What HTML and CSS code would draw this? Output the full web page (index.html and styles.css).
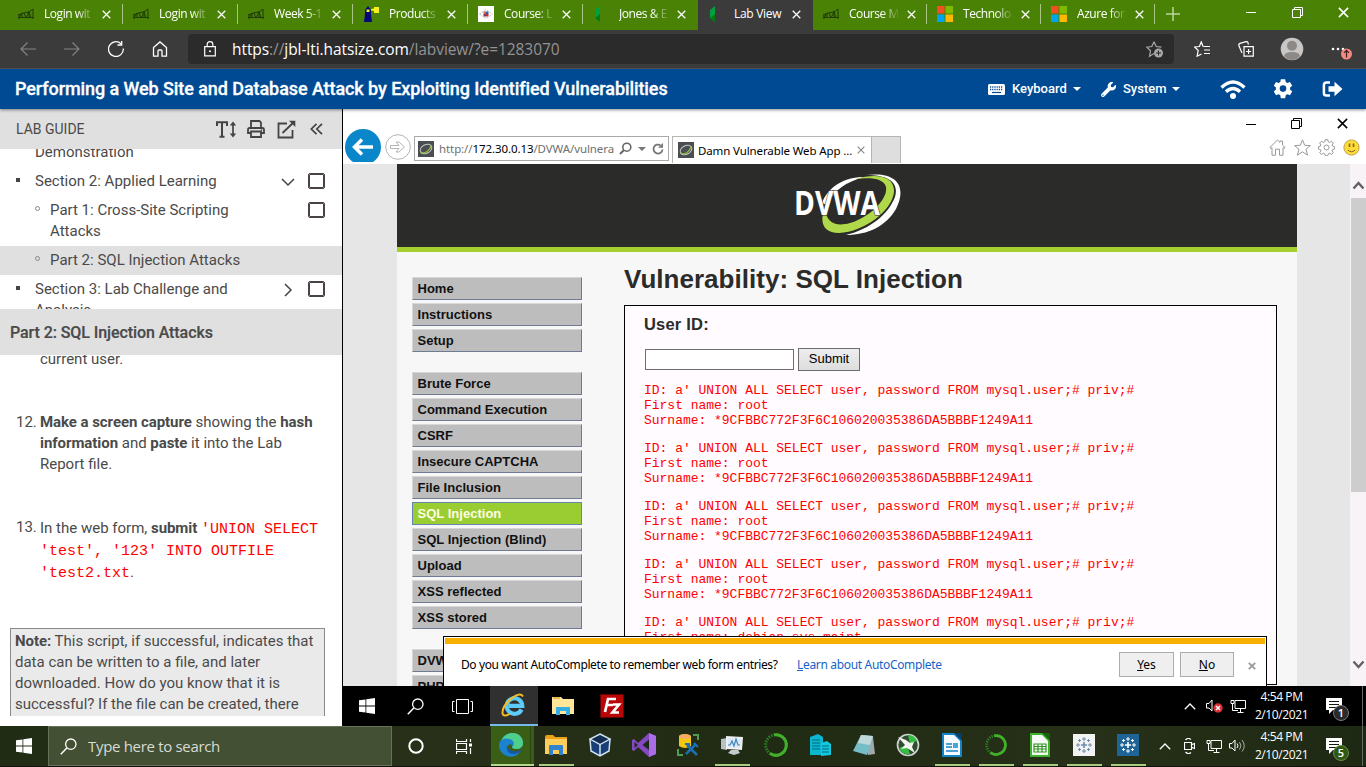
FILE: index.html
```html
<!DOCTYPE html>
<html lang="en">
<head>
<meta charset="utf-8">
<title>Lab View</title>
<link rel="stylesheet" href="styles.css">
</head>
<body>
<svg class="defs" aria-hidden="true">
  <symbol id="x" viewBox="0 0 10 10"><path d="M.8.8l8.4 8.4M9.2.8L.8 9.200" fill="none" stroke="currentColor" stroke-width="1.4"/></symbol>
  <symbol id="bridge" viewBox="0 0 16 12"><path d="M0 7l5-2 6-1 4-3v10M0 9.500h16M1 6v5M4 5v5M6 5l2 5 3-6 2 6M11 3v7M1 10l3-5" fill="none" stroke="#1f3d08" stroke-width="1"/></symbol>
  <symbol id="gem" viewBox="0 0 16 16"><path d="M7 0v16L2 12V4z" fill="#00a040"/><path d="M7 8v8L2 12z" fill="#087a12"/></symbol>
  <symbol id="ms" viewBox="0 0 16 16"><path d="M0 0h7.500v7.500H0z" fill="#f25022"/><path d="M8.500 0H16v7.500H8.500z" fill="#7fba00"/><path d="M0 8.500h7.500V16H0z" fill="#00a4ef"/><path d="M8.500 8.500H16V16H8.500z" fill="#ffb900"/></symbol>
  <symbol id="win" viewBox="0 0 16 16"><path d="M0 2.300L6.500 1.400V7.600H0zM7.300 1.200L16 0v7.600H7.300zM0 8.400h6.500v6.200L0 13.700zM7.300 8.400H16V16l-8.700-1.200z" fill="#fff"/></symbol>
  <symbol id="search" viewBox="0 0 17 17"><path d="M.8 16.200l6-6.200" fill="none" stroke="#fff" stroke-width="1.500"/><circle cx="10.800" cy="6.200" r="5.200" fill="none" stroke="#fff" stroke-width="1.300"/></symbol>
  <symbol id="ball" viewBox="0 0 16 16"><path d="M0 0h16v16H0z" fill="#4a4d52"/><ellipse cx="8" cy="8" rx="6.200" ry="4.300" transform="rotate(-28 8 8)" fill="none" stroke="#c8ccc5" stroke-width="1"/><path d="M3 11c3 2 8 0 10-6" fill="none" stroke="#8fbd3a" stroke-width="1.200"/></symbol>
  <symbol id="restore" viewBox="0 0 11 11"><path d="M.5 2.500h8v8h-8zM2.500 2.500v-2h8v8h-2" fill="none" stroke="currentColor"/></symbol>
  <symbol id="up" viewBox="0 0 12 7"><path d="M.8 6.200L6 1l5.200 5.200" fill="none" stroke="#fff" stroke-width="1.300"/></symbol>
  <symbol id="net" viewBox="0 0 16 14"><path d="M5 1.500h10.500v8H5zM1 1.500h3v3H1zM2.500 4.500v7H8M10.500 9.500v3.500M7.500 13.500h6" fill="none" stroke="#fff"/></symbol>
  <symbol id="folder" viewBox="0 0 22 20"><path d="M0 2q0-2 2-2h6l2 2h12v17H0z" fill="#e9a21c"/><path d="M0 4h22v15H0z" fill="#ffcd59"/><path d="M4 11q0-1 1-1h12q1 0 1 1v9h-4v-5H8v5H4z" fill="#2f83cf"/></symbol>
  <symbol id="note" viewBox="0 0 16 16"><path d="M0 0h16v12H7l-4 4v-4H0z" fill="#fff"/><path d="M3 3.500h10M3 6.500h10M3 9.500h7" stroke="#151a10" stroke-width="1.200"/></symbol>
  <symbol id="ana" viewBox="0 0 24 24"><circle cx="12" cy="12" r="10.300" fill="none" stroke="#2a7d22" stroke-width="3" stroke-dasharray="1.500 1.200"/><path d="M10 1.900A10.300 10.300 0 1 1 6 20.400" fill="none" stroke="#43b02a" stroke-width="3"/></symbol>
  <symbol id="tab" viewBox="0 0 18 18"><path d="M9 6v6M6 9h6" stroke-width="1.600"/><path d="M9 1v4M7 3h4M9 13v4M7 15h4M1 9h4M3 7v4M13 9h4M15 7v4M4.500 3v3M3 4.500h3M13.500 3v3M12 4.500h3M4.500 12v3M3 13.500h3M13.500 12v3M12 13.500h3" stroke-width="1"/></symbol>
</svg>

<header class="tabs">
  <div class="tab"><svg class="fav bridge"><use href="#bridge"/></svg><span class="name fade">Login wit</span><svg class="close"><use href="#x"/></svg></div>
  <div class="tab"><svg class="fav bridge"><use href="#bridge"/></svg><span class="name fade">Login wit</span><svg class="close"><use href="#x"/></svg></div>
  <div class="tab"><svg class="fav bridge"><use href="#bridge"/></svg><span class="name fade">Week 5-1</span><svg class="close"><use href="#x"/></svg></div>
  <div class="tab"><svg class="fav" viewBox="0 0 16 16"><path d="M2 4l3-4 3 4v4l1 8H1l1-8z" fill="#05057c"/><path d="M3.500 3.500h3v2.500h-3zM8 3l3-.5V1h5v6h-5V5L8 4.500z" fill="#f8f01c"/></svg><span class="name fade">Products</span><svg class="close"><use href="#x"/></svg></div>
  <div class="tab"><svg class="fav" viewBox="0 0 16 16"><path d="M0 0h16v16H0z" fill="#fff"/><path d="M1.500 8L8 3.500 14.500 8 8 12.500z" fill="none" stroke="#c4bfbf" stroke-dasharray="2 1"/><path d="M5.500 5.500H8V8H5.500z" fill="#d76a35"/><path d="M8 5.500h2.500V8H8z" fill="#3558a0"/><path d="M5.500 8H8v2.500H5.500z" fill="#75416a"/><path d="M8 8h2.500v2.500H8z" fill="#c52d38"/></svg><span class="name fade">Course: L</span><svg class="close"><use href="#x"/></svg></div>
  <div class="tab last"><svg class="fav"><use href="#gem"/></svg><span class="name fade">Jones &amp; E</span><svg class="close"><use href="#x"/></svg></div>
  <div class="tab active"><svg class="fav"><use href="#gem"/></svg><span class="name">Lab View</span><svg class="close"><use href="#x"/></svg></div>
  <div class="tab narrow"><svg class="fav bridge"><use href="#bridge"/></svg><span class="name fade">Course M</span><svg class="close"><use href="#x"/></svg></div>
  <div class="tab narrow"><svg class="fav"><use href="#ms"/></svg><span class="name fade">Technolo</span><svg class="close"><use href="#x"/></svg></div>
  <div class="tab narrow"><svg class="fav"><use href="#ms"/></svg><span class="name fade">Azure for</span><svg class="close"><use href="#x"/></svg></div>
  <svg class="plus" viewBox="0 0 14 14"><path d="M7 0v14M0 7h14" stroke="#bcd69a" stroke-width="1.500"/></svg>
  <div class="wincontrols">
    <svg width="10" height="10" viewBox="0 0 10 10"><path d="M0 5.500h10" stroke="#fff"/></svg>
    <svg width="11" height="11"><use href="#restore"/></svg>
    <svg width="11" height="11"><use href="#x"/></svg>
  </div>
</header>

<div class="toolbar">
  <svg class="nav dim" viewBox="0 0 16 16"><path d="M16 8H1M7.500 1.500L1 8l6.500 6.500"/></svg>
  <svg class="nav dim" viewBox="0 0 16 16"><path d="M0 8h15M8.500 1.500L15 8l-6.500 6.500"/></svg>
  <svg class="nav" viewBox="0 0 16 16"><path d="M15.300 7.500A7.400 7.400 0 1 1 13 2.700M13.700 0v4H9.500" stroke-width="1.300"/></svg>
  <svg class="nav" viewBox="0 0 16 16"><path d="M1.500 6.500L8 .9l6.500 5.600v8.700H10V10q0-1-1-1H7q-1 0-1 1v5.200H1.500z" stroke-width="1.300"/></svg>
  <div class="omnibox">
    <svg class="lock" viewBox="0 0 12 16"><path d="M.7 5.700h10.600v9.100H.7zM3.200 5.700V3.300q0-2.600 2.800-2.600t2.800 2.600v2.400" fill="none" stroke="#fff" stroke-width="1.200"/><circle cx="6" cy="10.200" r="1" fill="#fff"/></svg>
    <span class="url"><i>https</i>://<i>jbl-lti.hatsize.com</i>/labview/?e=1283070</span>
    <svg class="addfav" viewBox="0 0 18 17"><path d="M8 .8l2.200 4.700 5.200.6M8 .8L5.800 5.500.7 6.200l3.800 3.600-1 5.400L8 12.500" fill="none" stroke="#a8a8a8" stroke-width="1.200"/><circle cx="12.500" cy="12" r="4.500" fill="#a8a8a8"/><path d="M12.500 9.500v5M10 12h5" stroke="#2b2b2b"/></svg>
  </div>
  <div class="tools">
    <svg width="17" height="16" viewBox="0 0 17 16"><path d="M9 5.500L7.300.8 5.400 5.500.6 6l3.600 3.500-1.100 5.700L7.500 13M9.500 5.500H16M10 9h6M10 12.500h6" fill="none" stroke="#fff" stroke-width="1.200"/></svg>
    <svg width="17" height="16" viewBox="0 0 17 16"><path d="M6 5.700h9.300v9.500H6zM10.600 8v5M8.100 10.500h5" fill="none" stroke="#fff" stroke-width="1.200"/><path d="M4 12L.8 4.500Q.5 3 2 2.400L8 .7q1.500-.3 2 1l.4 2" fill="none" stroke="#fff" stroke-width="1.200"/></svg>
    <svg width="24" height="24" viewBox="0 0 24 24"><circle cx="12" cy="12" r="11.300" fill="#c9c7c5"/><circle cx="12" cy="8.700" r="5" fill="#8d8987"/><path d="M4 19q1-4 8-4t8 4q-3 4-8 4t-8-4" fill="#8d8987"/></svg>
    <svg width="21" height="24" viewBox="0 0 21 24"><circle cx="2" cy="12" r="1.300" fill="#fff"/><circle cx="7" cy="12" r="1.300" fill="#fff"/><circle cx="12" cy="12" r="1.300" fill="#fff"/><circle cx="15.500" cy="17" r="5.500" fill="#f28b82"/><path d="M15.500 20.500v-7M13 15.800l2.500-2.500 2.500 2.500" fill="none" stroke="#3b2020" stroke-width="1.200"/></svg>
  </div>
</div>

<div class="labbar">
  <h1>Performing a Web Site and Database Attack by Exploiting Identified Vulnerabilities</h1>
  <svg class="kbd" viewBox="0 0 17 11"><path d="M1.500 0h14q1.500 0 1.500 1.500v8q0 1.500-1.500 1.500h-14Q0 11 0 9.500v-8Q0 0 1.500 0z" fill="#fff"/><path d="M2 3h13M2 5.500h13" stroke="#004a93" stroke-width="1.300" stroke-dasharray="1.200 1"/><path d="M4 8.500h9" stroke="#004a93" stroke-width="1.200"/></svg>
  <span class="kb">Keyboard</span><b class="caret"></b>
  <svg class="wrench" viewBox="0 0 512 512"><path fill="#fff" d="M508 109c-2-9-14-12-20-5l-75 74-68-11-11-68 74-75c7-6 4-18-5-20-47-12-99 1-136 38-39 39-50 97-34 147L19 403a66 66 0 0 0 93 93l213-213c50 16 108 5 148-34 37-37 49-89 35-140zM66 472a24 24 0 1 1 0-48 24 24 0 0 1 0 48z"/></svg>
  <span class="sys">System</span><b class="caret"></b>
  <svg class="wifi" viewBox="0 0 26 19"><path d="M1.500 7.500Q13-3.500 24.500 7.500M6 11.800q7-6.500 14 0" fill="none" stroke="#fff" stroke-width="3.300"/><circle cx="13" cy="16" r="3" fill="#fff"/></svg>
  <svg class="gear" viewBox="0 0 20 20"><path fill-rule="evenodd" fill="#fff" d="M7.800.3h4.400l.5 2.700 1.700 1L17 3l2.200 3.800-2.100 1.800v2l2.100 1.800L17 16.200l-2.600-1-1.700 1-.5 3H7.800l-.5-3-1.700-1-2.600 1-2.200-3.800 2.100-1.800v-2L.8 6.800 3 3l2.600 1 1.700-1zM10 6.300a3.300 3.300 0 1 0 0 6.600 3.300 3.300 0 0 0 0-6.600z"/></svg>
  <svg class="out" viewBox="0 0 20 16"><path d="M7.500 1.400H4q-2.600 0-2.600 2.600v8q0 2.600 2.600 2.600h3.500" fill="none" stroke="#fff" stroke-width="2.500"/><path d="M6 5.200h6V.8L20 8l-8 7.200v-4.400H6z" fill="#fff"/></svg>
</div>

<main class="main">
  <aside class="guide">
    <div class="guidehead">
      <span>LAB GUIDE</span>
      <svg width="21" height="17" viewBox="0 0 21 17"><path d="M1 5V1.200h10V5M6 1v14.500M3.500 15.800h5" fill="none" stroke="#444" stroke-width="2"/><path d="M17 2v13" stroke="#444" stroke-width="1.700"/><path d="M13.800 4.500L17 .5l3.200 4zM13.800 12.500l3.200 4 3.200-4z" fill="#444"/></svg>
      <svg width="18" height="18" viewBox="0 0 18 18"><path d="M4 8V1h8.500L14 2.500V8M4 13H1V9.500Q1 8 2.500 8h13Q17 8 17 9.500V13h-3M4 11.500h10V17H4z" fill="none" stroke="#444" stroke-width="1.800"/><circle cx="14.500" cy="10" r=".8" fill="#444"/></svg>
      <svg width="19" height="19" viewBox="0 0 19 19"><path d="M10 3.500H1.500v14h14V10M5.500 13L17 2" fill="none" stroke="#444" stroke-width="1.800"/><path d="M12 .8h6.300V7z" fill="#444"/></svg>
      <svg width="13" height="12" viewBox="0 0 13 12"><path d="M6.500.8L1.300 6l5.200 5.200M12 .8L6.800 6l5.200 5.200" fill="none" stroke="#444" stroke-width="1.700"/></svg>
    </div>
    <div class="toc">
      <div class="row s"><span>Demonstration</span></div>
      <div class="row s"><em class="sq"></em><span>Section 2: Applied Learning</span><svg class="chev" viewBox="0 0 14 14"><path d="M1 4l6 6 6-6"/></svg><i class="box"></i></div>
      <div class="row p"><em class="ring"></em><span>Part 1: Cross-Site Scripting Attacks</span><i class="box"></i></div>
      <div class="row p on"><em class="ring"></em><span>Part 2: SQL Injection Attacks</span></div>
      <div class="row s"><em class="sq"></em><span>Section 3: Lab Challenge and Analysis</span><svg class="chev" viewBox="0 0 14 14"><path d="M4 1l6 6-6 6"/></svg><i class="box"></i></div>
    </div>
    <h2>Part 2: SQL Injection Attacks</h2>
    <div class="text">
      <p class="cur">current user.</p>
      <div class="step"><span class="n">12.</span><p><b>Make a screen capture</b> showing the <b>hash<br>information</b> and <b>paste</b> it into the Lab<br>Report file.</p></div>
      <div class="step code"><span class="n">13.</span><p>In the web form, <b>submit</b> <code>'UNION SELECT<br>'test', '123' INTO OUTFILE<br>'test2.txt</code>.</p></div>
      <div class="notebox"><b>Note:</b> This script, if successful, indicates that<br>data can be written to a file, and later<br>downloaded. How do you know that it is<br>successful? If the file can be created, there</div>
    </div>
  </aside>

  <section class="remote">
    <div class="ietop">
      <div class="iecontrols">
        <svg width="10" height="10" viewBox="0 0 10 10"><path d="M0 5.500h10" stroke="#000"/></svg>
        <svg width="11" height="11"><use href="#restore"/></svg>
        <svg width="11" height="11"><use href="#x"/></svg>
      </div>
      <div class="ierow">
        <svg class="back" viewBox="0 0 36 33"><circle cx="18" cy="18" r="18" fill="#0a86ca"/><path d="M28 18H10M17 10.500L9.500 18l7.500 7.500" fill="none" stroke="#fff" stroke-width="3.500"/></svg>
        <svg class="fwd" viewBox="0 0 26 26"><circle cx="13" cy="13" r="12.300" fill="#fff" stroke="#b4b4b4"/><path d="M5.500 11.500H14l-3-3.500h3l5.500 5-5.500 5h-3l3-3.500H5.500z" fill="none" stroke="#b4b4b4"/></svg>
        <div class="addr"><svg class="fi"><use href="#ball"/></svg><span>http://<b>172.30.0.13</b>/DVWA/vulnera</span>
          <svg class="mag" viewBox="0 0 13 13"><circle cx="7.800" cy="5.200" r="4" fill="none" stroke="#666" stroke-width="1.600"/><path d="M5 8l-4 4" stroke="#666" stroke-width="2"/></svg>
          <svg class="dd" viewBox="0 0 8 4"><path d="M0 0h8L4 4z" fill="#777"/></svg>
          <svg class="ref" viewBox="0 0 12 12"><path d="M8.500 2.300A4.500 4.500 0 1 0 10.500 6.500" fill="none" stroke="#777" stroke-width="1.800"/><path d="M6 4.800h5V0z" fill="#777"/></svg></div>
        <div class="ietab"><svg class="fi"><use href="#ball"/></svg><span>Damn Vulnerable Web App ...</span><svg class="tx"><use href="#x"/></svg></div>
        <div class="stub"></div>
        <div class="ieicons">
          <svg viewBox="0 0 17 17"><path d="M.8 8.500L8.500 1l2.500 2.400V2h2.500v4l2.700 2.500L15 9.500l-1-.8v7.500h-3.500v-6h-4v6H3V8.700l-1 .8z"/></svg>
          <svg viewBox="0 0 17 17"><path d="M8.500.8l2.200 5.500 5.700.3-4.400 3.700 1.600 5.900-5.100-3.400-5.100 3.400L5 10.300.6 6.600l5.700-.3z"/></svg>
          <svg viewBox="0 0 17 17"><circle cx="8.500" cy="8.500" r="2.500"/><path d="M7.200.7h2.600l.5 2.200 1.300.6 1.900-1.300 1.800 1.800-1.200 2 .6 1.200 1.900.4v2.400l-2 .5-.5 1.300 1.200 1.900-1.800 1.700-1.900-1.200-1.300.6-.5 2H7.200l-.4-2-1.400-.6-1.900 1.200L1.700 13.700l1.200-1.900-.5-1.300-2-.5V7.600l2-.4.5-1.200-1.200-2 1.800-1.800 1.900 1.300 1.400-.6z"/></svg>
          <svg class="smile" viewBox="0 0 17 17"><circle cx="8.500" cy="8.500" r="7.600"/><path class="eyes" d="M6.500 4.500v3.500M10.500 4.500v3.500"/><path d="M4.800 11q3.700 3.500 7.400 0"/></svg>
        </div>
      </div>
    </div>
    <div class="view">
      <div class="dvwa">
        <div class="banner">
          <svg width="110" height="66" viewBox="0 0 110 66"><path d="M72 2C104-2 113 14 102 36 92 53 74 62 52 62 76 56 94 42 101 24 105 10 96 2 72 2z" fill="#fff"/><path d="M28 30C34 14 50 4 70 4 52 9 40 17 33 32z" fill="#fff"/><path d="M61 6C85-1 101 4 100 19 98 38 70 59 45 60 29 60 25 49 31 35 32 50 42 54 56 50 76 44 94 26 92 14 90 5 76 4 61 6z" fill="#b0d84b"/><text x="0" y="42" textLength="86" lengthAdjust="spacingAndGlyphs" class="logotext">DVWA</text></svg>
        </div>
        <div class="cols">
          <nav class="menu">
            <a>Home</a><a>Instructions</a><a>Setup</a>
            <a class="gap">Brute Force</a><a>Command Execution</a><a>CSRF</a><a>Insecure CAPTCHA</a><a>File Inclusion</a><a class="sel">SQL Injection</a><a>SQL Injection (Blind)</a><a>Upload</a><a>XSS reflected</a><a>XSS stored</a>
            <a class="gap">DVWA Security</a><a>PHP Info</a>
          </nav>
          <div class="body">
            <h3>Vulnerability: SQL Injection</h3>
            <div class="panel">
              <h4>User ID:</h4>
              <div class="form"><span class="input"></span><span class="submit">Submit</span></div>
<pre>ID: a' UNION ALL SELECT user, password FROM mysql.user;# priv;#
First name: root
Surname: *9CFBBC772F3F6C106020035386DA5BBBF1249A11</pre>
<pre>ID: a' UNION ALL SELECT user, password FROM mysql.user;# priv;#
First name: root
Surname: *9CFBBC772F3F6C106020035386DA5BBBF1249A11</pre>
<pre>ID: a' UNION ALL SELECT user, password FROM mysql.user;# priv;#
First name: root
Surname: *9CFBBC772F3F6C106020035386DA5BBBF1249A11</pre>
<pre>ID: a' UNION ALL SELECT user, password FROM mysql.user;# priv;#
First name: root
Surname: *9CFBBC772F3F6C106020035386DA5BBBF1249A11</pre>
<pre>ID: a' UNION ALL SELECT user, password FROM mysql.user;# priv;#
First name: debian-sys-maint</pre>
            </div>
          </div>
        </div>
      </div>
      <div class="scroll"><svg viewBox="0 0 12 9"><path d="M1 7.500l5-5.500 5 5.500"/></svg><i></i><svg viewBox="0 0 12 9"><path d="M1 1.500L6 7l5-5.500"/></svg></div>
      <div class="ask">
        <div class="askrow"><span class="q">Do you want AutoComplete to remember web form entries?</span><span class="learn"><u>L</u>earn about AutoComplete</span><span class="btn"><u>Y</u>es</span><span class="btn no"><u>N</u>o</span><svg class="ax" viewBox="0 0 8 8"><path d="M.8.8l6.400 6.400M7.200.8L.8 7.200" stroke="#999" stroke-width="1.800"/></svg></div>
      </div>
    </div>
    <div class="rbar">
      <svg class="r1" width="16" height="16"><use href="#win"/></svg>
      <svg class="r2" width="17" height="17"><use href="#search"/></svg>
      <svg class="r3" width="21" height="15" viewBox="0 0 21 15"><path d="M4.500.5h12v14h-12zM2.500 2.500h-2v10h2M18.500 2.500h2v10h-2" fill="none" stroke="#fff"/></svg>
      <div class="ietile"><svg width="26" height="24" viewBox="0 0 26 24"><path d="M20.500 16.500A7.800 7.800 0 1 1 21.300 12.800H8" fill="none" stroke="#5ccbf8" stroke-width="4.200"/><path d="M22 3.500Q19-1 11 5 1 13 1.500 20.500 2.500 24.500 9 20.500" fill="none" stroke="#f2bd27" stroke-width="2"/></svg></div>
      <svg class="r5" width="22" height="20" viewBox="0 0 22 20"><path d="M0 1h9l2 2h11v15H0z" fill="#ffe699"/><path d="M1 2h7" stroke="#e3ac31" stroke-width="1.500"/><path d="M4 11h14v8h-4v-4H8v4H4z" fill="#36aee4"/></svg>
      <svg class="r6" width="24" height="24" viewBox="0 0 24 24"><path d="M.5.500h23v23H.5z" fill="#b90606" stroke="#690000" stroke-dasharray="2 1"/><path d="M5 18L8 5h8M6.500 11H13M13 10.500h6L12.500 18.500H19" fill="none" stroke="#fff" stroke-width="2.700"/></svg>
      <div class="tray">
        <svg width="12" height="7"><use href="#up"/></svg>
        <svg class="t2" width="17" height="14" viewBox="0 0 17 14"><path d="M.5 4.500H3L6 1v11L3 9H.5z" fill="none" stroke="#fff"/><circle cx="12" cy="9" r="4.700" fill="#dc2d34"/><path d="M10 7l4 4M14 7l-4 4" stroke="#fff" stroke-width="1.400"/></svg>
        <svg class="t3" width="16" height="14"><use href="#net"/></svg>
        <div class="clock"><span>4:54 PM</span><span>2/10/2021</span></div>
        <div class="act"><svg width="16" height="16"><use href="#note"/></svg><b>1</b></div>
      </div>
    </div>
  </section>
</main>

<footer class="bar">
  <svg class="start" width="16" height="16"><use href="#win"/></svg>
  <div class="find"><svg width="17" height="17"><use href="#search"/></svg><span>Type here to search</span></div>
  <svg class="cort" viewBox="0 0 16 16"><circle cx="8" cy="8" r="6.700" fill="none" stroke="#fff" stroke-width="2"/></svg>
  <svg class="tv" viewBox="0 0 17 15"><path d="M.5 0v2.500h10V0M.5 15v-2.500h10V15M.5 4.500h10v6H.5zM14.500 0v3M14.500 9v6" fill="none" stroke="#fff" stroke-width="1.200"/><path d="M13 4.500h3v3h-3z" fill="#fff"/></svg>
  <div class="apps">
    <div class="app edge"><svg viewBox="0 0 24 24"><path d="M1 12C2 4 7 0 13 0c7 0 11 5 11 10 0 4-3 6-7 6-3 0-4-1-4-2 3-4-1-7-5-6-4 0-6 2-7 4z" fill="#36c8ae"/><path d="M14 0c7 0 10 6 10 10 0 4-3 6-7 6-3 0-4-1-3-3 3-4-1-8-9-8 2-3 5-5 9-5z" fill="#5ad27c" opacity=".7"/><path d="M0 12c0-4 4-7 9-6 5 0 7 4 5 7-3-3-6-1-5 2 1 4 6 6 12 4-3 4-8 6-13 4C3 21 0 17 0 12z" fill="#1c82d0"/><path d="M8 12c-2 7 4 12 13 7 2-1 2-2 1-2-7 3-13 1-14-5z" fill="#1558a8"/></svg></div>
    <div class="app run exp"><svg class="f" viewBox="0 0 22 20"><use href="#folder"/></svg></div>
    <div class="app"><svg viewBox="0 0 24 24"><path d="M12 1l10 5v12l-10 5.500L2 18V6z" fill="#173e75"/><path d="M12 1l10 5-10 5.500L2 6z" fill="#132c51" stroke="#d3e2ef" stroke-width="1.400"/><path d="M12 11.500V23M2 6l1 12 9 5 9-5 1-12" fill="none" stroke="#d3e2ef" stroke-width="1.500"/></svg></div>
    <div class="app"><svg viewBox="0 0 24 24"><path d="M17 0l7 3v18l-7 3L6 14l-4 4-2-1V7l2-1 4 4z" fill="#8548c4"/><path d="M17 6.500V17l-6.500-5zM2.500 9v6L6 12z" fill="#1d2b16"/><path d="M17 0l7 3v18l-7 3z" fill="#a96ee5"/></svg></div>
    <div class="app"><svg viewBox="0 0 24 24"><path d="M3 3q5-4 12 0v10q-6 4-12 0z" fill="#f3c812"/><ellipse cx="9" cy="3.500" rx="6" ry="2.500" fill="#f8aa62"/><path d="M17 2h5v5M2 16v6h5" fill="none" stroke="#4f9c55" stroke-width="2"/><path d="M10 21L20 11M11 12l10 10" stroke="#1e70b5" stroke-width="2.500"/><path d="M18 10l4 4M9 11h4v4" stroke="#1e70b5" stroke-width="2" fill="none"/></svg></div>
    <div class="app run"><svg viewBox="0 0 24 24"><path d="M1 6l6-1v12l-6-1z" fill="#b8bfc2"/><path d="M6 3l17 1-1 13-16-1z" fill="#edf0ef"/><path d="M8 5l13 .7-1 9L8 14z" fill="#dceafa"/><path d="M8 12h2l2-4 2 5 2-7 2 6h2" fill="none" stroke="#4384b7" stroke-width="1.200"/><path d="M11 17h7l2 3-6 2-6-2z" fill="#c5cacc"/></svg></div>
    <div class="app"><svg><use href="#ana"/></svg></div>
    <div class="app"><svg viewBox="0 0 24 24"><path d="M2 4l8-3 5 3v18H2z" fill="#0ab6d0"/><path d="M13 10l6-2 4 3v11l-10 1z" fill="#13c8de"/><path d="M4 7h8M4 10h8M4 13h8M4 16h8M14 13h7M14 16h7M14 19h7" stroke="#06667a"/></svg></div>
    <div class="app"><svg viewBox="0 0 24 24"><path d="M10 2l11 2 2 17-7 1z" fill="#9da9ad"/><path d="M9 2l12 1-6 19-14-4z" fill="#75bec8"/><path d="M9 2l12 1-3 9-12-2z" fill="#bed8d9"/></svg></div>
    <div class="app"><svg viewBox="0 0 24 24"><circle cx="12" cy="12" r="10.500" fill="#314c30" stroke="#cbd1ce" stroke-width="1.700"/><path d="M12 2a10 10 0 0 1 9 6l-7 3zM3 15l8-3 3 9Q6 22 3 15z" fill="#35bd44"/><path d="M2 4l8 3 4 3 4-1-2 5 3 6-8-5-6 1 4-4z" fill="#f4f4ee"/></svg></div>
    <div class="app run"><svg viewBox="0 0 24 24"><path d="M2 0h13l7 7v17H2z" fill="#1583c7"/><path d="M4 2h10l6 6v14H4z" fill="#f4fafd"/><path d="M14 0h8v8z" fill="#073e62"/><path d="M6 11h6M6 14h6M6 18h12" stroke="#1583c7" stroke-width="1.700"/><path d="M13 10h5v5h-5z" fill="#4ba3db"/></svg></div>
    <div class="app run"><svg class="sm"><use href="#ana"/></svg></div>
    <div class="app run"><svg viewBox="0 0 24 24"><path d="M2 0h13l7 7v17H2z" fill="#3fb22c"/><path d="M4 2h10l6 6v14H4z" fill="#f5fbf4"/><path d="M14 0h8v8z" fill="#146407"/><path d="M6 11h12v8H6zM6 13.500h12M6 16h12M10 11v8M14 11v8" fill="none" stroke="#329323" stroke-width="1.200"/></svg></div>
    <div class="app run"><div class="tb light"><svg viewBox="0 0 18 18"><use href="#tab"/></svg></div></div>
    <div class="app run"><div class="tb blue"><svg viewBox="0 0 18 18"><use href="#tab"/></svg></div></div>
  </div>
  <div class="tray">
    <svg width="12" height="7"><use href="#up"/></svg>
    <svg class="l2" width="11" height="16" viewBox="0 0 11 16"><path d="M.5 4.500h7v7h-7zM8 6.500l2.500-1v5L8 9.500M1.500 2Q4-.8 7 1.500M1.500 14q2.500 2.800 5.500.5" fill="none" stroke="#fff" stroke-width="1.200"/></svg>
    <svg class="l3" width="16" height="14"><use href="#net"/></svg>
    <svg class="l4" width="17" height="14" viewBox="0 0 17 14"><path d="M.5 4.500H3L6 1v11L3 9H.5zM8 4.500q2 2.300 0 4.500" fill="none" stroke="#fff"/><path d="M10.500 3q3 4 0 7.500M13 1q4.500 6 0 11.500" fill="none" stroke="#aab0a3"/></svg>
    <div class="clock"><span>4:54 PM</span><span>2/10/2021</span></div>
    <div class="act"><svg width="16" height="16"><use href="#note"/></svg><b class="g">5</b></div>
  </div>
</footer>
</body>
</html>
```

FILE: styles.css
```css
* { box-sizing: border-box; }
body { margin: 0; width: 1366px; height: 767px; overflow: hidden; display: flex; flex-direction: column; background: #000; font-family: "Open Sans", sans-serif; }
svg { display: block; flex: none; }
.defs { position: absolute; width: 0; height: 0; }
h1, h2, h3, h4, p, pre { margin: 0; }

/* Browser tab strip */
.tabs { height: 30px; flex: none; background: #498205; display: flex; align-items: center; padding-left: 8px; color: #fff; }
.tab { width: 115px; height: 30px; flex: none; display: flex; align-items: center; padding: 0 0 3px 10px; background: linear-gradient(#a9c684, #a9c684) right 4px / 1px 20px no-repeat; }
.tab.last { background: none; }
.tab.narrow { width: 114px; }
.tab.active { background: #3b3b3b; }
.fav { width: 16px; height: 16px; }
.fav.bridge { height: 12px; }
.name { width: 50px; margin-left: 10px; font-size: 12px; letter-spacing: -.45px; white-space: nowrap; line-height: 20px; }
.active .name { letter-spacing: -.3px; }
.fade { -webkit-mask-image: linear-gradient(90deg, #000 65%, transparent 102%); mask-image: linear-gradient(90deg, #000 65%, transparent 102%); }
.close { width: 9px; height: 9px; margin: 2px 0 0 8px; }
.plus { width: 14px; height: 14px; margin: 0 0 2px 11px; }
.wincontrols { margin-left: 66px; display: flex; gap: 35.5px; padding-bottom: 5px; }

/* Address toolbar */
.toolbar { height: 39px; flex: none; background: #3b3b3b; border-bottom: 1px solid #575757; display: flex; align-items: center; padding-left: 20px; }
.nav { width: 16px; height: 16px; margin-right: 28px; fill: none; stroke: #fff; stroke-width: 1.1; }
.nav.dim { stroke: #858585; }
.omnibox { width: 986px; height: 30px; margin-left: -8px; background: #2b2b2b; border-radius: 4px; display: flex; align-items: center; padding: 0 10px 0 16px; }
.lock { width: 12px; height: 16px; }
.url { flex: 1; margin-left: 16px; font-size: 15.5px; color: #939393; letter-spacing: -.07px; }
.url i { font-style: normal; color: #fff; }
.addfav { width: 18px; height: 17px; }
.tools { display: flex; align-items: center; margin-left: 20px; gap: 26.5px; }
.tools svg:nth-child(3) { margin-left: -1px; }

/* Lab title bar */
.labbar { height: 40px; flex: none; background: #004a93; display: flex; align-items: center; color: #fff; font-family: Roboto, sans-serif; padding-left: 15px; z-index: 1; box-shadow: 0 1px 3px rgba(0,0,0,.45); }
.labbar h1 { width: 973px; font-size: 18px; font-weight: 500; letter-spacing: -.08px; -webkit-text-stroke: .3px #fff; white-space: nowrap; padding-bottom: 1px; }
.kbd { width: 17px; height: 11px; }
.kb, .sys { font-size: 13px; font-weight: 500; margin-left: 7px; width: 55px; white-space: nowrap; padding-bottom: 1px; }
.sys { width: 43px; }
.caret { border: 4px solid transparent; border-top-color: #fff; border-bottom: 0; margin-left: 6px; }
.wrench { width: 15px; height: 15px; margin-left: 20px; }
.wifi { width: 26px; height: 19px; margin-left: 40px; }
.gear { width: 20px; height: 20px; margin-left: 27px; }
.out { width: 21px; height: 16px; margin-left: 29px; }

.main { height: 617px; flex: none; display: flex; }

/* Lab guide */
.guide { width: 342px; flex: none; background: #fff; color: #4a4a4a; font-family: Roboto, sans-serif; font-size: 15px; line-height: 21px; display: flex; flex-direction: column; }
.guidehead { height: 40px; flex: none; background: #e0e0e0; display: flex; align-items: center; padding-left: 16px; font-size: 14px; }
.guidehead span { width: 200px; }
.guidehead svg + svg { margin-left: 10px; }
.guidehead svg:nth-child(4) { margin-left: 12px; }
.guidehead svg:last-child { margin-left: 14px; }
.toc { height: 160px; flex: none; overflow: hidden; }
.toc .row:first-child { margin-top: -11px; }
.row { display: flex; padding: 4px 18px 4px 35px; align-items: flex-start; }
.row span { width: 205px; }
.row.p { padding-left: 50px; }
.row.p span { width: 200px; }
.on { background: #e0e0e0; }
.sq { width: 4px; height: 4px; background: #444; margin: 7px 15px 0 -19px; }
.ring { width: 5px; height: 5px; border: 1px solid #888; border-radius: 50%; margin: 6px 10px 0 -15px; }
.chev { width: 14px; height: 14px; margin: 4px 0 0 41px; fill: none; stroke: #444; stroke-width: 1.5; }
.box { width: 15px; height: 14px; border: 1.5px solid #4a4048; outline: .5px solid #4a4048; border-radius: 1px; margin: 3px 0 0 auto; }
.guide h2 { height: 46px; flex: none; background: #e0e0e0; font-size: 16px; font-weight: 500; line-height: 48px; padding-left: 10px; letter-spacing: -.08px; -webkit-text-stroke: .2px #4a4a4a; }
.text { height: 361px; overflow: hidden; }
.text b { font-weight: 700; letter-spacing: -.06px; }
.cur { margin: -6px 0 0 40px; }
.step { display: flex; margin-top: 42px; padding-left: 16px; }
.n { width: 24px; }
.step.code p { line-height: 22px; height: 66px; margin-top: -.5px; white-space: nowrap; }
.text code { font: 15px/1px "Liberation Mono", monospace; color: #f00; }
.notebox { margin: 45px 0 0 10px; width: 315px; height: 120px; border: 1px solid #8a8a8a; background: #eaeaea; padding: 2px 4px; white-space: nowrap; }

/* Remote desktop */
.remote { width: 1024px; flex: none; display: flex; flex-direction: column; border-left: 1px solid #000; }
.ietop { height: 55px; flex: none; background: #fff; font-size: 11.5px; }
.iecontrols { height: 27px; display: flex; justify-content: flex-end; gap: 35px; align-items: center; padding: 2px 18px 0 0; }
.ierow { height: 28px; display: flex; align-items: flex-start; padding-left: 2px; }
.back { width: 36px; height: 33px; margin-top: -7px; }
.fwd { width: 26px; height: 26px; margin: -2px 0 0 4px; }
.addr { width: 255px; height: 25px; margin-left: 3px; border: 1px solid #a9a9a9; display: flex; align-items: center; padding-left: 3px; color: #707070; font-family: "Noto Sans", sans-serif; }
.addr span { width: 176px; margin-left: 5px; white-space: nowrap; letter-spacing: -.09px; }
.addr b { font-weight: 400; color: #000; }
.fi { width: 16px; height: 16px; }
.mag { width: 13px; height: 13px; margin-left: 4px; }
.dd { width: 8px; height: 4px; margin-left: 6px; }
.ref { width: 12px; height: 12px; margin-left: 6px; }
.ietab { width: 200px; height: 27px; margin-left: 3px; border: 1px solid #b5b5b5; border-bottom: 0; display: flex; align-items: center; padding-left: 5px; font-family: "Noto Sans", sans-serif; }
.ietab span { width: 159px; margin-left: 4px; white-space: nowrap; letter-spacing: -.12px; }
.tx { width: 8px; height: 8px; color: #888; }
.stub { width: 29px; height: 27px; background: #dedede; border: 1px solid #b5b5b5; border-left: 0; border-bottom: 0; }
.ieicons { margin: 3px 0 0 368px; display: flex; gap: 7.5px; }
.ieicons svg { width: 17px; height: 17px; fill: none; stroke: #999; }
.ieicons .smile circle { fill: #ffdc3c; stroke: #b9a04a; }
.ieicons .smile path { stroke: #85641c; }
.ieicons .smile .eyes { stroke-width: 1.6; }

.view { height: 522px; flex: none; background: #e6e6e6; display: flex; position: relative; overflow: hidden; padding-left: 54px; }
.dvwa { width: 900px; background: #f7f7f7; font-family: "Liberation Sans", sans-serif; }
.banner { height: 88px; background: #2b2c2a; border-bottom: 5px solid #a5cf2e; padding: 9px 0 0 397px; }
.logotext { font: 700 34px "Open Sans", sans-serif; fill: #fff; stroke: #2b2c2a; stroke-width: 1.2px; paint-order: stroke; }
.cols { display: flex; }
.menu { width: 170px; margin: 25px 0 0 15px; display: flex; flex-direction: column; gap: 3px; }
.menu a { height: 23px; background: #bdbdbd; border: 1px solid #6f7b92; border-top-color: #d7d7d7; border-left-color: #d7d7d7; padding-left: 4.500px; font-size: 13px; font-weight: 700; line-height: 21px; color: #111; letter-spacing: .02px; white-space: nowrap; }
.menu .gap { margin-top: 17px; }
.menu .sel { background: #9acd32; border-color: #6685b0; color: #fffde0; }
.body { margin-left: 42px; width: 653px; color: #2b2c2a; }
.body h3 { font-size: 26px; height: 53px; line-height: 54px; white-space: nowrap; letter-spacing: .03px; }
.panel { height: 380px; border: 1px solid #000; background: #fffbff; padding: 7px 0 0 19px; overflow: hidden; }
.panel h4 { font-size: 16.500px; line-height: 22px; letter-spacing: .2px; }
.form { display: flex; gap: 4px; align-items: center; margin: 13px 0 12px 1px; height: 23px; }
.input { width: 149px; height: 21px; background: #fff; border: 1px solid #6d6d6d; }
.submit { width: 62px; height: 23px; border: 1px solid #6d6d6d; background: linear-gradient(#eee, #ddd); color: #000; text-align: center; font-size: 13px; line-height: 20px; }
.panel pre { font: 13px/15px "Liberation Mono", monospace; letter-spacing: -.02px; color: #f00; margin: 0 0 13px 0; }
.scroll { width: 16px; margin-left: auto; background: #f8f3f7; display: flex; flex-direction: column; justify-content: space-between; align-items: flex-end; padding: 17px 1px 17px 0; }
.scroll svg { width: 13px; height: 9px; fill: none; stroke: #606060; stroke-width: 2.4; }
.scroll i { width: 15px; height: 294px; margin: 8px -1px auto 0; background: #cdcdcd; }
.ask { position: absolute; left: 100px; top: 472px; width: 824px; height: 50px; border: 1px solid #000; border-bottom: 0; background: #fff; padding: 1px; }
.askrow { border-top: 6px solid #f8b000; display: flex; align-items: center; height: 46px; padding: 0 0 0 16px; font: 12px "Noto Sans", sans-serif; color: #000; white-space: nowrap; }
.q { width: 336px; letter-spacing: -.39px; }
.learn { width: 322px; color: #1464c8; letter-spacing: -.33px; }
.btn { width: 55px; height: 25px; background: #efefef; border: 1px solid #acacac; text-align: center; line-height: 23px; }
.btn.no { margin-left: 6px; width: 54px; }
.ax { width: 8px; height: 8px; margin: 3px 0 0 14px; }

.rbar { height: 40px; flex: none; background: #000; display: flex; align-items: center; }
.r1 { margin-left: 16px; }
.r2 { margin-left: 32px; }
.r3 { margin-left: 28px; }
.ietile { width: 48px; height: 40px; margin-left: 17px; background: #303030; border-bottom: 2px solid #76b9ed; display: flex; align-items: center; justify-content: center; }
.r5 { margin-left: 14px; }
.r6 { margin-left: 26px; }
.tray { margin-left: auto; display: flex; align-items: center; height: 40px; }
.t2 { margin-left: 10px; }
.t3 { margin-left: 7px; }
.clock { width: 70px; display: flex; flex-direction: column; align-items: center; font-size: 12px; line-height: 18px; color: #fff; letter-spacing: -.4px; padding-left: 1px; }
.act { position: relative; width: 50px; height: 40px; padding: 12px 0 0 10px; background: linear-gradient(#666, #666) 46px 0 / 1px 40px no-repeat; }
.act b { position: absolute; left: 17px; top: 19px; width: 16px; height: 16px; border-radius: 50%; border: 1px solid #777; background: #2a2a2a; color: #fff; font-size: 11px; font-weight: 600; line-height: 14px; text-align: center; }
.act b.g { background: #2f5812; border-color: #6c8a50; }

/* Desktop taskbar */
.bar { height: 41px; flex: none; background: linear-gradient(90deg, #202d14, #293019 32%, #202b13 55%, #273018 80%, #1e2914); border-bottom: 1px solid #10140c; display: flex; align-items: center; }
.start { margin-left: 16px; }
.find { width: 344px; height: 40px; margin-left: 16px; background: #435033; border: 1px solid #67725a; display: flex; align-items: center; padding-left: 11px; color: #d8dbd3; font-size: 15px; letter-spacing: -.55px; }
.find span { margin-left: 11px; letter-spacing: -.32px; }
.cort { width: 16px; height: 16px; margin-left: 16px; }
.tv { width: 17px; height: 15px; margin-left: 32px; }
.apps { display: flex; margin-left: 17px; }
.app { width: 35px; height: 40px; margin: 0 4.500px; padding-bottom: 1px; display: flex; align-items: center; justify-content: center; border-bottom: 2px solid transparent; }
.app > svg { width: 24px; height: 24px; }
.app > svg.f { width: 22px; height: 20px; }
.app > svg.sm { width: 22px; height: 22px; }
.app.run { border-bottom-color: #a9cc80; }
.app.edge { width: 43px; margin: 0 .5px; background: linear-gradient(90deg, #3b5e16 39px, #2a4514 39px, #2a4514 40px, #3b5e16 40px); border-bottom-color: #b5d98c; padding-right: 3px; }
.tb { width: 22px; height: 22px; padding: 2px; background: #f2f2f2; stroke: #6d8cae; }
.tb svg { width: 18px; height: 18px; }
.tb.blue { background: #1f6496; stroke: #fff; }
.l2 { margin-left: 13px; }
.l3 { margin-left: 11px; }
.l4 { margin-left: 7px; }
```
